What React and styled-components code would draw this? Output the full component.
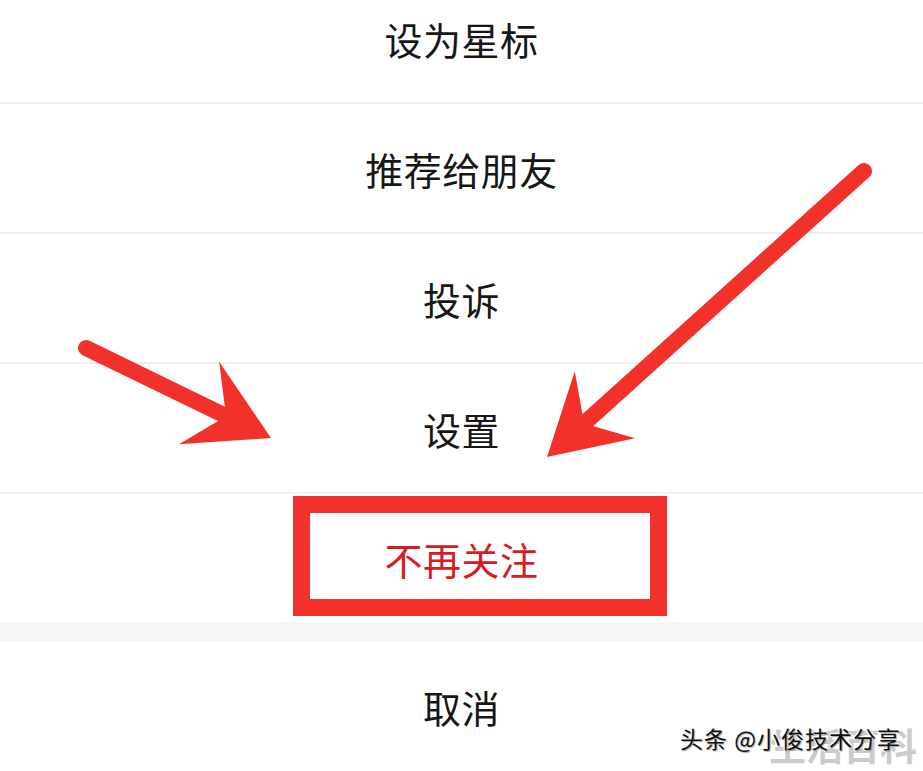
import React from 'react';
import styled, { createGlobalStyle } from 'styled-components';

const GlobalStyle = createGlobalStyle`
  html, body {
    margin: 0;
    padding: 0;
    background: #ffffff;
    overflow: hidden;
  }
  #root {
    width: 923px;
    height: 771px;
  }
`;

const Page = styled.div`
  position: relative;
  width: 923px;
  height: 771px;
  overflow: hidden;
  background: #ffffff;
  font-family: "Noto Sans CJK SC", "Noto Sans", sans-serif;
`;

const Sheet = styled.div`
  display: flex;
  flex-direction: column;
  margin-top: -26px;
`;

const Option = styled.div`
  height: 128px;
  display: flex;
  align-items: center;
  justify-content: center;
  font-size: 38px;
  letter-spacing: 0.5px;
  color: ${(p) => (p.$danger ? '#d81b1f' : '#161616')};
  border-bottom: ${(p) => (p.$last ? 'none' : '2px solid #eeeeee')};
`;

const Spacer = styled.div`
  height: 20px;
  background: #f6f6f6;
`;

const Marks = styled.svg`
  position: absolute;
  inset: 0;
  pointer-events: none;
`;

const Watermark = styled.div`
  position: absolute;
  right: 6px;
  bottom: 6px;
  display: grid;
  justify-items: end;
`;

const Faint = styled.span`
  grid-area: 1 / 1;
  font-size: 37px;
  line-height: 40px;
  font-weight: 700;
  color: #cbcbcb;
`;

const Credit = styled.span`
  grid-area: 1 / 1;
  align-self: start;
  margin-right: 16px;
  margin-top: -4px;
  font-size: 23px;
  letter-spacing: 1px;
  color: #111111;
  text-shadow: 1px 1px 1px rgba(0, 0, 0, 0.35), -1px -1px 0 #ffffff, 1px -1px 0 #ffffff, -1px 1px 0 #ffffff;
`;

const RED = '#f2312a';

// arrow: round-capped shaft ending in a notched head
const Arrow = ({ from, tip, width = 16, len = 80, spread = 46, notch = 50 }) => {
  const dx = tip[0] - from[0];
  const dy = tip[1] - from[1];
  const d = Math.hypot(dx, dy);
  const ux = dx / d;
  const uy = dy / d;
  const nx = -uy;
  const ny = ux;
  const base = [tip[0] - ux * len, tip[1] - uy * len];
  const b1 = [base[0] + nx * spread, base[1] + ny * spread];
  const b2 = [base[0] - nx * spread, base[1] - ny * spread];
  const n = [tip[0] - ux * notch, tip[1] - uy * notch];
  return (
    <g fill={RED} stroke={RED}>
      <line x1={from[0]} y1={from[1]} x2={n[0]} y2={n[1]} strokeWidth={width} strokeLinecap="round" />
      <polygon points={`${tip.join(',')} ${b1.join(',')} ${n.join(',')} ${b2.join(',')}`} stroke="none" />
    </g>
  );
};

const options = ['设为星标', '推荐给朋友', '投诉', '设置'];

const App = () => (
  <Page>
    <GlobalStyle />
    <Sheet>
      {options.map((label) => (
        <Option key={label}>{label}</Option>
      ))}
      <Option $danger $last>不再关注</Option>
      <Spacer />
      <Option $last>取消</Option>
    </Sheet>

    <Marks width="923" height="771" viewBox="0 0 923 771">
      <rect x="301.5" y="504.5" width="357" height="103" fill="none" stroke={RED} strokeWidth="17" />
      <Arrow from={[86, 348]} tip={[271, 438]} />
      <Arrow from={[864, 171]} tip={[547, 457]} len={78} spread={45} />
    </Marks>

    <Watermark>
      <Faint>生活百科</Faint>
      <Credit>头条 @小俊技术分享</Credit>
    </Watermark>
  </Page>
);

export default App;
